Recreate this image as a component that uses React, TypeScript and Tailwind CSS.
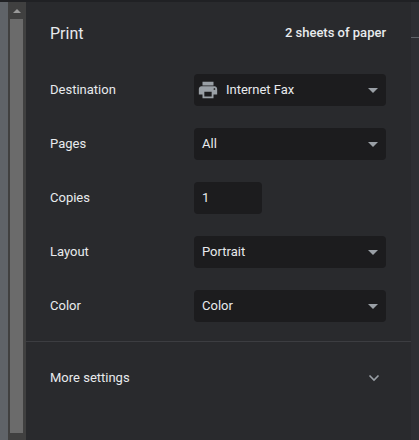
const font = { fontFamily: "Roboto, sans-serif" };

function Caret() {
  return <span className="ml-auto mr-[6px] h-0 w-0 border-x-[5px] border-t-[5px] border-x-transparent border-t-[#9aa0a6]" />;
}

function Select({ label, icon }: { label: string; icon?: boolean }) {
  return (
    <div className="flex h-8 w-[192px] items-center rounded bg-[#1c1c1e] pl-2 pr-[2px] text-[13px] text-[#e8eaed]">
      {icon && (
        <svg viewBox="0 0 24 24" className="-ml-[5px] mr-[7px] h-[22px] w-[22px] fill-[#9aa0a6]">
          <path d="M19 8H5c-1.66 0-3 1.34-3 3v6h4v4h12v-4h4v-6c0-1.66-1.34-3-3-3zm-3 11H8v-5h8v5zm3-7c-.55 0-1-.45-1-1s.45-1 1-1 1 .45 1 1-.45 1-1 1zm-1-9H6v4h12V3z" />
        </svg>
      )}
      <span>{label}</span>
      <Caret />
    </div>
  );
}

function Row({ label, children }: { label: string; children: React.ReactNode }) {
  return (
    <div className="flex h-[54px] items-center pl-6">
      <span className="w-[144px] text-[13px] text-[#e8eaed]">{label}</span>
      {children}
    </div>
  );
}

export default function App() {
  return (
    <div className="flex h-[440px] w-[419px] flex-col overflow-hidden bg-[#292a2d]" style={font}>
      <div className="h-[2px] bg-[#202124]" />
      <div className="flex min-h-0 flex-1">
        <div className="w-2 bg-[#5f6368]" />
        <div className="flex w-[18px] flex-col items-start bg-[#404040] pb-[7px] pl-[2px]">
          <span className="ml-[3px] mt-[7px] h-0 w-0 border-x-[4px] border-b-[4px] border-x-transparent border-b-[#9a9a9a]" />
          <div className="mt-[6px] w-[13px] flex-1 bg-[#6b6b6b]" />
        </div>
        <div className="flex min-w-0 flex-1 flex-col">
          <div className="flex h-[61px] items-center justify-between pl-6 pr-[25px]">
            <span className="pt-[2px] text-[16px] text-[#e8eaed]">Print</span>
            <span className="text-[13px] font-medium text-[#e8eaed]">2 sheets of paper</span>
          </div>
          <Row label="Destination"><Select label="Internet Fax" icon /></Row>
          <Row label="Pages"><Select label="All" /></Row>
          <Row label="Copies">
            <div className="flex h-8 w-[68px] items-center rounded bg-[#1c1c1e] pl-2 text-[13px] text-[#e8eaed]">1</div>
          </Row>
          <Row label="Layout"><Select label="Portrait" /></Row>
          <Row label="Color"><Select label="Color" /></Row>
          <div className="mt-2 border-t border-[#3c3d41]" />
          <div className="flex h-[71px] items-center pl-6 pr-[31px]">
            <span className="text-[13px] text-[#e8eaed]">More settings</span>
            <svg viewBox="0 0 12 8" className="ml-auto h-2 w-3 fill-none stroke-[#9aa0a6] stroke-[1.6]">
              <path d="M1.5 1.5 6 6l4.5-4.5" />
            </svg>
          </div>
        </div>
        <div className="w-2 bg-[#2e2f33] pt-[35px]">
          <div className="h-px bg-[#5f6368]" />
        </div>
      </div>
    </div>
  );
}
